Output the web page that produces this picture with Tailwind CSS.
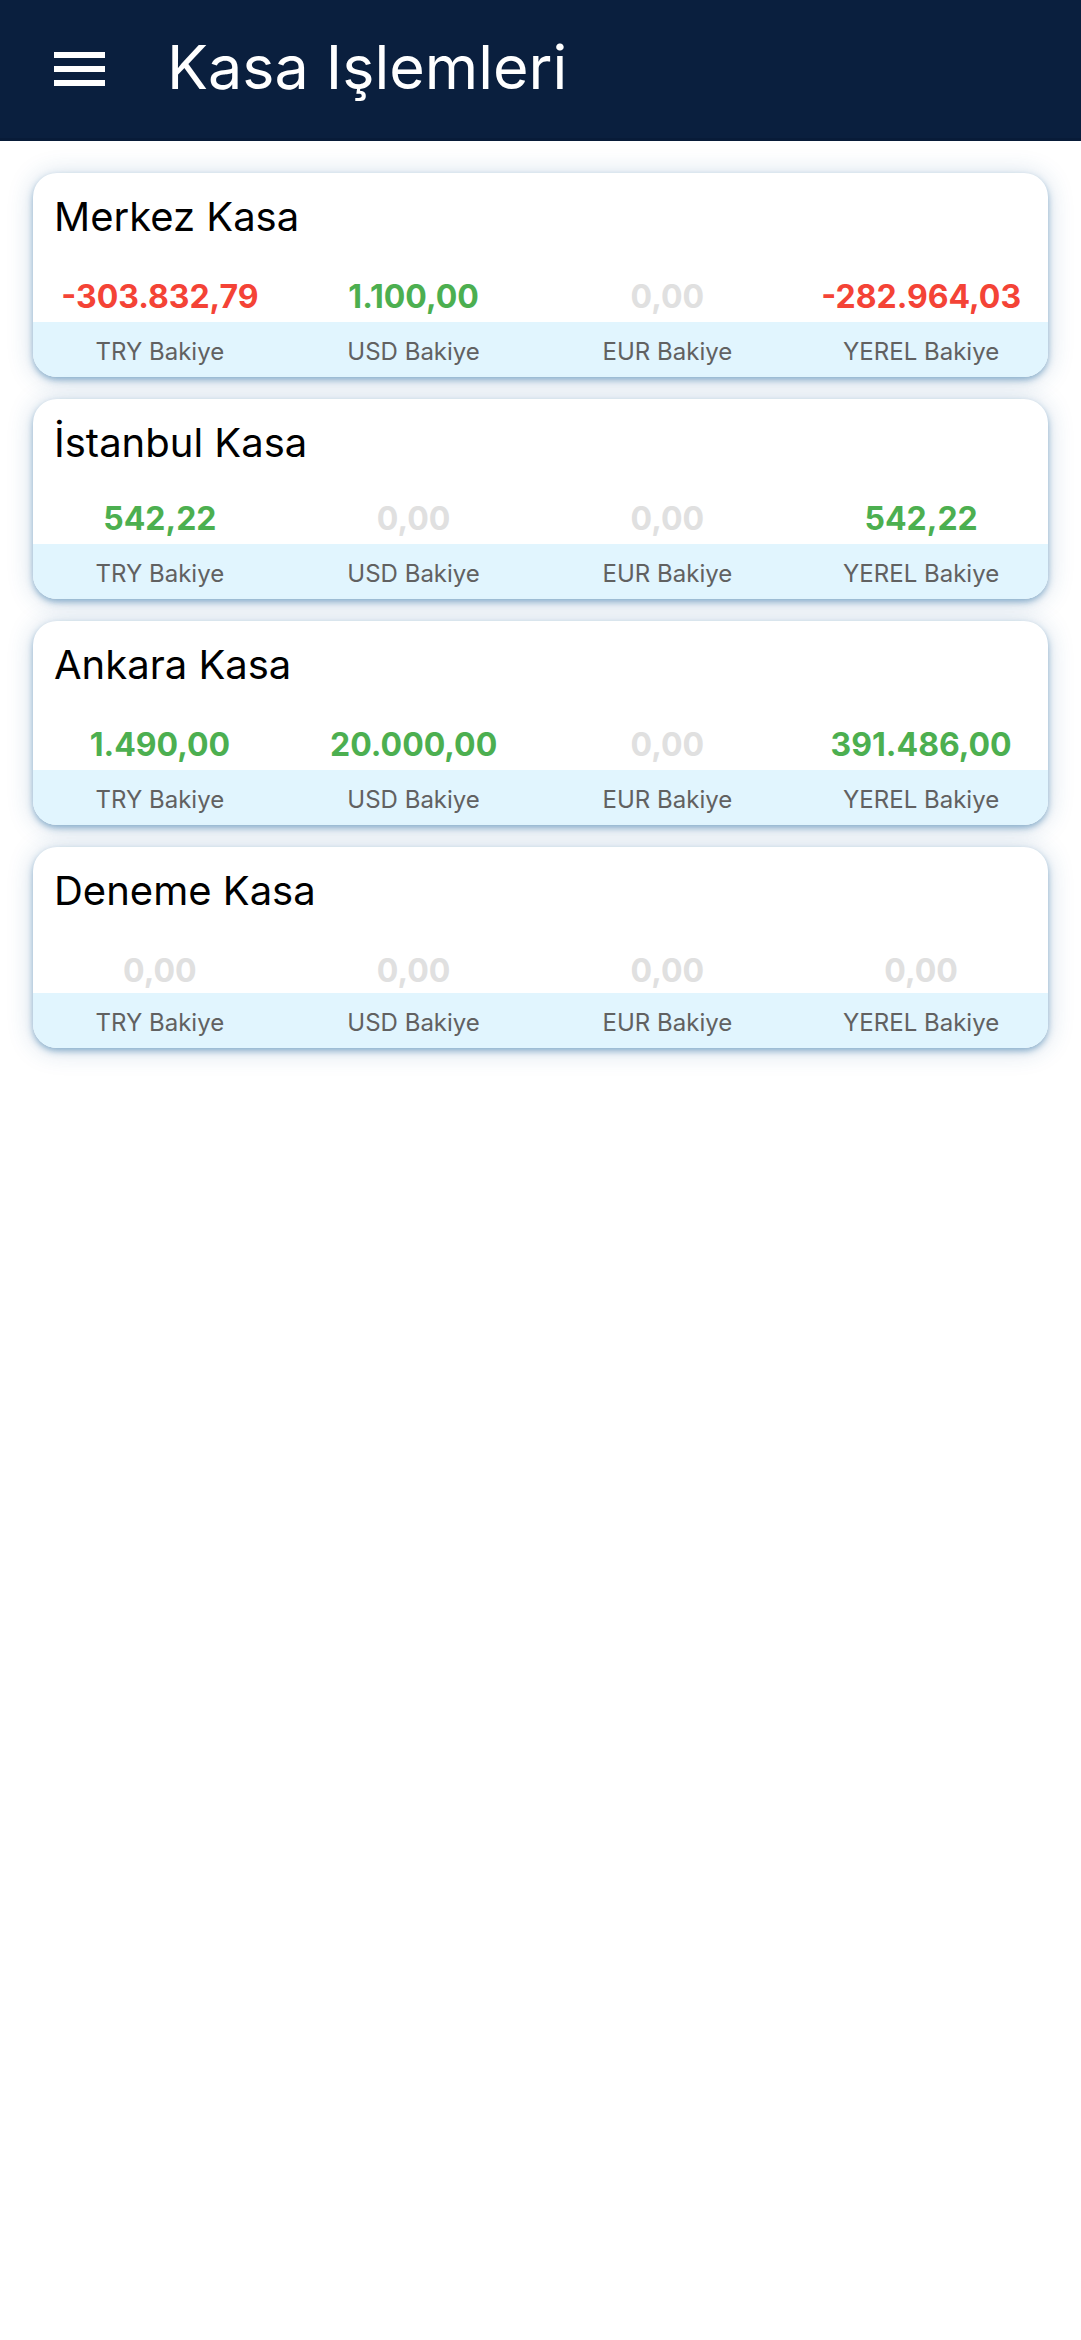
<!DOCTYPE html>
<html lang="tr">
<head>
<meta charset="utf-8">
<meta name="viewport" content="width=device-width, initial-scale=1">
<title>Kasa Işlemleri</title>
<script src="https://cdn.jsdelivr.net/npm/@tailwindcss/browser@4"></script>
</head>
<body class="min-h-screen bg-white font-['Inter',sans-serif] text-black">
<header class="flex items-center gap-[51px] border-b-3 border-[#081b38] bg-[#0a1f3e] pt-7 pr-8 pb-8 pl-12 text-white">
  <button type="button" aria-label="Menü" class="flex h-13 w-17 items-center pt-1 pl-1.5">
    <svg viewBox="0 0 51 34" class="h-[34px] w-[51px] fill-current" aria-hidden="true"><path d="M0 0h51v6H0zM0 14h51v6H0zM0 28h51v6H0z"/></svg>
  </button>
  <h1 class="text-[61px] leading-[78px]">Kasa Işlemleri</h1>
</header>
<main class="flex flex-col gap-[22px] px-[33px] py-8">
  <section class="overflow-hidden rounded-[24px] bg-white shadow-[0_3px_6px_rgba(50,115,165,0.5),0_2px_26px_rgba(30,90,150,0.22)]">
    <h2 class="px-[21px] pt-5 text-[40px] leading-12">Merkez Kasa</h2>
    <table class="mt-9 w-full table-fixed text-center">
      <tbody>
        <tr class="text-[32px] leading-10 font-bold">
          <td class="pb-[5px] text-[#f44336]">-303.832,79</td>
          <td class="pb-[5px] text-[#4caf50]">1.100,00</td>
          <td class="pb-[5px] text-[#e0e0e0]">0,00</td>
          <td class="pb-[5px] text-[#f44336]">-282.964,03</td>
        </tr>
        <tr class="bg-[#e1f5fe] text-2xl leading-10 text-[#616161]">
          <th scope="col" class="pt-2.5 pb-[5px] font-normal">TRY Bakiye</th>
          <th scope="col" class="pt-2.5 pb-[5px] font-normal">USD Bakiye</th>
          <th scope="col" class="pt-2.5 pb-[5px] font-normal">EUR Bakiye</th>
          <th scope="col" class="pt-2.5 pb-[5px] font-normal">YEREL Bakiye</th>
        </tr>
      </tbody>
    </table>
  </section>
  <section class="overflow-hidden rounded-[24px] bg-white shadow-[0_3px_6px_rgba(50,115,165,0.5),0_2px_26px_rgba(30,90,150,0.22)]">
    <h2 class="px-[21px] pt-5 text-[40px] leading-12">İstanbul Kasa</h2>
    <table class="mt-8 w-full table-fixed text-center">
      <tbody>
        <tr class="text-[32px] leading-10 font-bold">
          <td class="pb-[5px] text-[#4caf50]">542,22</td>
          <td class="pb-[5px] text-[#e0e0e0]">0,00</td>
          <td class="pb-[5px] text-[#e0e0e0]">0,00</td>
          <td class="pb-[5px] text-[#4caf50]">542,22</td>
        </tr>
        <tr class="bg-[#e1f5fe] text-2xl leading-10 text-[#616161]">
          <th scope="col" class="pt-2.5 pb-[5px] font-normal">TRY Bakiye</th>
          <th scope="col" class="pt-2.5 pb-[5px] font-normal">USD Bakiye</th>
          <th scope="col" class="pt-2.5 pb-[5px] font-normal">EUR Bakiye</th>
          <th scope="col" class="pt-2.5 pb-[5px] font-normal">YEREL Bakiye</th>
        </tr>
      </tbody>
    </table>
  </section>
  <section class="overflow-hidden rounded-[24px] bg-white shadow-[0_3px_6px_rgba(50,115,165,0.5),0_2px_26px_rgba(30,90,150,0.22)]">
    <h2 class="px-[21px] pt-5 text-[40px] leading-12">Ankara Kasa</h2>
    <table class="mt-9 w-full table-fixed text-center">
      <tbody>
        <tr class="text-[32px] leading-10 font-bold">
          <td class="pb-[5px] text-[#4caf50]">1.490,00</td>
          <td class="pb-[5px] text-[#4caf50]">20.000,00</td>
          <td class="pb-[5px] text-[#e0e0e0]">0,00</td>
          <td class="pb-[5px] text-[#4caf50]">391.486,00</td>
        </tr>
        <tr class="bg-[#e1f5fe] text-2xl leading-10 text-[#616161]">
          <th scope="col" class="pt-2.5 pb-[5px] font-normal">TRY Bakiye</th>
          <th scope="col" class="pt-2.5 pb-[5px] font-normal">USD Bakiye</th>
          <th scope="col" class="pt-2.5 pb-[5px] font-normal">EUR Bakiye</th>
          <th scope="col" class="pt-2.5 pb-[5px] font-normal">YEREL Bakiye</th>
        </tr>
      </tbody>
    </table>
  </section>
  <section class="overflow-hidden rounded-[24px] bg-white shadow-[0_3px_6px_rgba(50,115,165,0.5),0_2px_26px_rgba(30,90,150,0.22)]">
    <h2 class="px-[21px] pt-5 text-[40px] leading-12">Deneme Kasa</h2>
    <table class="mt-9 w-full table-fixed text-center">
      <tbody>
        <tr class="text-[32px] leading-10 font-bold">
          <td class="pb-0.5 text-[#e0e0e0]">0,00</td>
          <td class="pb-0.5 text-[#e0e0e0]">0,00</td>
          <td class="pb-0.5 text-[#e0e0e0]">0,00</td>
          <td class="pb-0.5 text-[#e0e0e0]">0,00</td>
        </tr>
        <tr class="bg-[#e1f5fe] text-2xl leading-10 text-[#616161]">
          <th scope="col" class="pt-2.5 pb-[5px] font-normal">TRY Bakiye</th>
          <th scope="col" class="pt-2.5 pb-[5px] font-normal">USD Bakiye</th>
          <th scope="col" class="pt-2.5 pb-[5px] font-normal">EUR Bakiye</th>
          <th scope="col" class="pt-2.5 pb-[5px] font-normal">YEREL Bakiye</th>
        </tr>
      </tbody>
    </table>
  </section>
</main>
</body>
</html>
